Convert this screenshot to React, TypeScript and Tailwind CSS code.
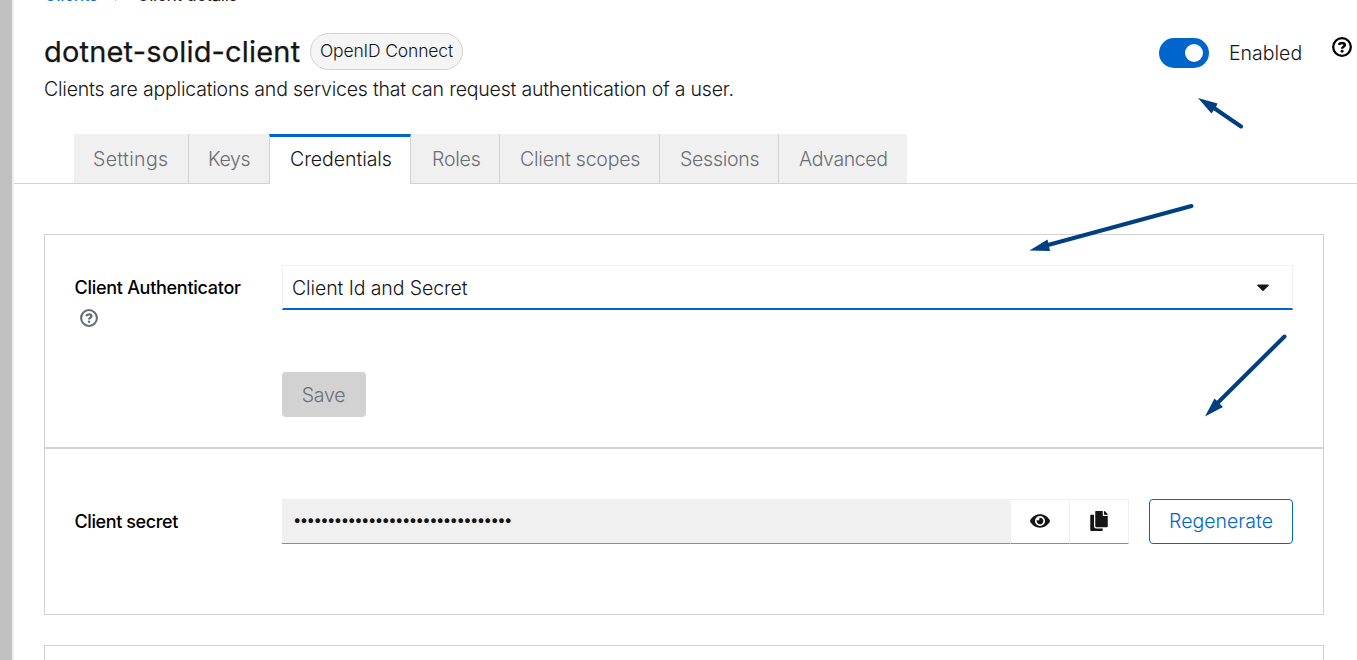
import type { ReactNode } from "react";
import { FaCaretDown, FaCopy, FaEye } from "react-icons/fa";

const tabs = [
  { label: "Settings", box: "w-[115px] border-r pl-[19px]", text: "tracking-[0.35px]" },
  { label: "Keys", box: "w-[80px] pl-[19px]", text: "tracking-[-0.4px]" },
  { label: "Credentials", box: "w-[142px] pl-[20px]", text: "tracking-[-0.05px]", active: true },
  { label: "Roles", box: "w-[89px] border-r pl-[21px]", text: "tracking-[-0.2px]" },
  { label: "Client scopes", box: "w-[160px] border-r pl-[20px]", text: "tracking-[-0.22px]" },
  { label: "Sessions", box: "w-[119px] border-r pl-[20px]", text: "tracking-[-0.25px]" },
  { label: "Advanced", box: "w-[128px] pl-[20px]", text: "tracking-[-0.38px]" },
];

function HelpIcon({ className }: { className: string }) {
  return (
    <svg viewBox="0 0 20 20" fill="none" stroke="currentColor" className={className}>
      <circle cx="10" cy="10" r="8.8" strokeWidth="2.3" />
      <path d="M6.900 7.900C7.400 6.500 8.500 5.900 10 5.900C11.800 5.900 12.800 6.800 12.800 8C12.800 9.800 10.100 9.700 10.100 11.800" strokeWidth="2.500" />
      <circle cx="10.100" cy="14.200" r="1.450" fill="currentColor" stroke="none" />
    </svg>
  );
}

function Label({ children, className }: { children: ReactNode; className: string }) {
  return <span className={`-ml-[0.5px] block whitespace-nowrap text-[18px] leading-6 font-medium text-black ${className}`}>{children}</span>;
}

function Header() {
  return (
    <header className="flex h-[134px] flex-col pl-[30px]">
      <nav className="-mt-[17px] flex h-6 items-center gap-4 text-[17.5px] leading-6 whitespace-nowrap">
        <a className="tracking-[-0.4px] text-[#0066cc]">Clients</a>
        <svg className="h-3 w-2 fill-none stroke-[#6a6e73] stroke-2" viewBox="0 0 8 12"><path d="M1 1l5 5-5 5" /></svg>
        <span className="-ml-px tracking-[-0.45px] text-[#151515]">Client details</span>
      </nav>
      <div className="mt-[24px] flex h-10 items-center">
        <h1 className="w-[266px] pt-px text-[29px] leading-10 font-normal tracking-[0.18px] whitespace-nowrap [-webkit-text-stroke:0.25px_#151515]">dotnet-solid-client</h1>
        <span className="flex h-[37px] w-[153px] items-center justify-center rounded-full border border-[#d2d2d2] bg-[#f5f5f5] pt-px text-[17.5px] font-light tracking-[-0.15px] whitespace-nowrap">OpenID Connect</span>
        <span className="mt-[3px] ml-[696px] flex h-[30px] w-[50px] items-center justify-end rounded-full bg-[#0066cc] pr-[6px]">
          <span className="size-[18px] rounded-full bg-white shadow" />
        </span>
        <span className="mt-[5px] ml-5 w-[103px] text-[19.5px] font-light whitespace-nowrap">Enabled</span>
        <HelpIcon className="mb-[8px] size-5 text-black" />
      </div>
      <p className="mt-[6px] text-[19.5px] leading-6 font-light tracking-[-0.205px] whitespace-nowrap">Clients are applications and services that can request authentication of a user.</p>
    </header>
  );
}

function Arrows() {
  return (
    <svg className="pointer-events-none absolute inset-0 h-[660px] w-[1357px] fill-[#004080] stroke-[#004080]" viewBox="0 0 1357 660">
      <g strokeWidth="4" strokeLinecap="round">
        <path d="M1241 126.500L1214 108M1191.500 206L1048 245M1284.500 336.500L1217 403.500" />
      </g>
      <g stroke="none">
        <path d="M1198 98L1217.500 103.500L1216 107L1211.500 113.500Z" />
        <path d="M1029.500 250.500L1047.500 239.500L1050 251Z" />
        <path d="M1205 416.500L1214.500 398.500L1217.500 401.500L1223 407Z" />
      </g>
    </svg>
  );
}

export default function App() {
  return (
    <div className="relative flex h-[660px] w-[1357px] overflow-hidden bg-white font-['Inter',sans-serif] text-[#151515]">
      <aside className="w-[14px] shrink-0 border-r-2 border-[#f0f0f0] bg-[#c1c1c1]" />
      <main className="w-[1343px] shrink-0">
        <Header />
        <div className="flex h-[50px] items-end border-b border-[#d2d2d2] pl-[60px]">
          {tabs.map((t) =>
            t.active ? (
              <div key={t.label} className={`-mb-px flex h-[50px] items-center border-x border-t-3 border-x-[#d2d2d2] border-t-[#0066cc] bg-white pb-[2px] ${t.box}`}>
                <span className={`text-[19.5px] font-light whitespace-nowrap text-[#151515] ${t.text}`}>{t.label}</span>
              </div>
            ) : (
              <div key={t.label} className={`flex h-[49px] items-center border-[#d2d2d2] bg-[#f0f0f0] pt-[2px] ${t.box}`}>
                <span className={`text-[19.5px] font-light whitespace-nowrap text-[#6a6e73] ${t.text}`}>{t.label}</span>
              </div>
            ),
          )}
        </div>
        <div className="pt-[50px] pl-[30px]">
          <section className="flex h-[214px] w-[1280px] border border-[#d2d2d2] px-[30px] pt-[30px]">
            <div className="w-[207px] shrink-0 pt-[11px]">
              <Label className="tracking-[-0.28px]">Client Authenticator</Label>
              <HelpIcon className="mt-[9px] ml-[5px] size-[18px] text-[#6a6e73]" />
            </div>
            <div className="flex-1">
              <div className="flex h-[45px] w-[1011px] items-center justify-between border border-b-2 border-[#f0f0f0] border-b-[#0066cc] pt-[3px] pr-[19px] pl-[9px]">
                <span className="text-[19.5px] font-light tracking-[-0.1px]">Client Id and Secret</span>
                <FaCaretDown className="mb-[4px] size-5" />
              </div>
              <button className="mt-[62px] h-[45px] w-[84px] rounded-[4px] bg-[#d2d2d2] pt-[2px] pr-px text-[19.5px] font-light tracking-[-0.2px] text-[#6a6e73]">Save</button>
            </div>
          </section>
          <section className="-mt-px flex h-[168px] w-[1280px] border border-t-2 border-[#d2d2d2] px-[30px] pt-[50px]">
            <div className="w-[207px] shrink-0 pt-[11px]">
              <Label className="tracking-[-0.4px]">Client secret</Label>
            </div>
            <div className="flex h-[45px]">
              <div className="flex w-[728px] items-center border-b border-[#8a8d90] bg-[#f0f0f0] pl-[11px]">
                <span className="pb-[2px] text-[15px] tracking-[-1.63px]">••••••••••••••••••••••••••••••••</span>
              </div>
              <button className="flex w-[60px] items-center justify-center border border-[#f0f0f0] border-b-[#8a8d90] pb-px"><FaEye className="size-5" /></button>
              <button className="-ml-px flex w-[60px] items-center justify-center border border-[#f0f0f0] border-b-[#8a8d90] pb-px"><FaCopy className="size-5" /></button>
            </div>
            <button className="ml-5 h-[45px] w-[144px] rounded-[4px] border border-[#0066cc] text-[19.5px] font-light text-[#0066cc]">Regenerate</button>
          </section>
          <section className="mt-[30px] h-[60px] w-[1280px] border border-[#d2d2d2]" />
        </div>
      </main>
      <Arrows />
    </div>
  );
}
